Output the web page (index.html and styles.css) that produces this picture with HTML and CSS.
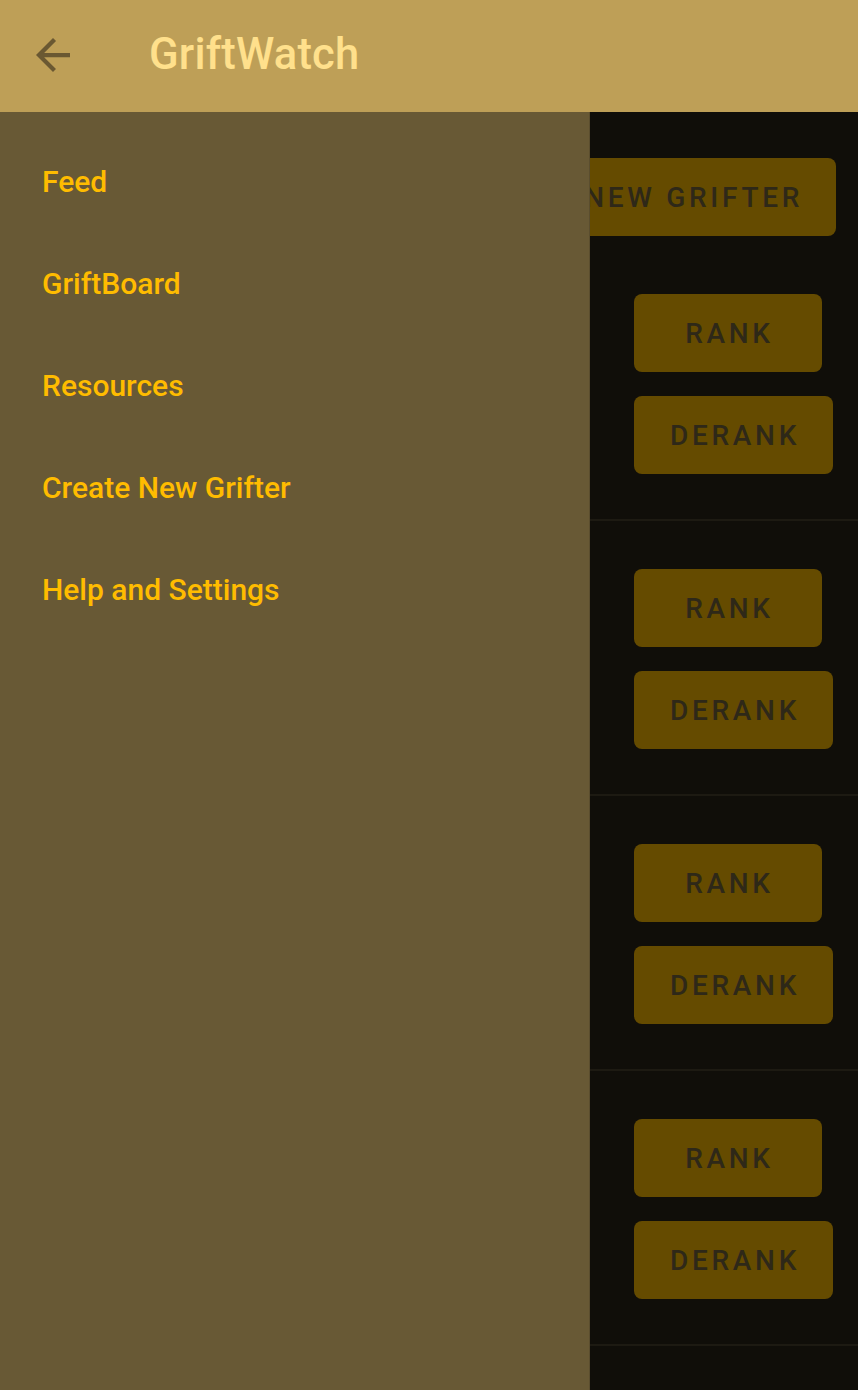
FILE: index.html
```html
<!DOCTYPE html>
<html lang="en">
<head>
<meta charset="utf-8">
<title>GriftWatch</title>
<link rel="stylesheet" href="styles.css">
</head>
<body>
<header class="appbar">
  <button class="back" aria-label="Back">
    <svg viewBox="4 4 16 16" width="34" height="34" aria-hidden="true"><path d="M20 11H7.83l5.59-5.59L12 4l-8 8 8 8 1.41-1.41L7.83 13H20v-2z" fill="currentColor"/></svg>
  </button>
  <h1 class="title">GriftWatch</h1>
</header>
<div class="stage">
  <main class="content">
    <div class="toolbar">
      <button class="btn">Create New Grifter</button>
    </div>
    <ul class="list">
      <li class="row"><div class="actions"><button class="btn btn-rank">Rank</button><button class="btn">Derank</button></div></li>
      <li class="row"><div class="actions"><button class="btn btn-rank">Rank</button><button class="btn">Derank</button></div></li>
      <li class="row"><div class="actions"><button class="btn btn-rank">Rank</button><button class="btn">Derank</button></div></li>
      <li class="row"><div class="actions"><button class="btn btn-rank">Rank</button><button class="btn">Derank</button></div></li>
      <li class="row row-empty"></li>
    </ul>
  </main>
  <nav class="drawer">
    <a class="nav-item" href="#">Feed</a>
    <a class="nav-item" href="#">GriftBoard</a>
    <a class="nav-item" href="#">Resources</a>
    <a class="nav-item" href="#">Create New Grifter</a>
    <a class="nav-item" href="#">Help and Settings</a>
  </nav>
</div>
</body>
</html>
```

FILE: styles.css
```css
* { box-sizing: border-box; }
html, body {
  margin: 0;
  padding: 0;
  height: 100%;
}
body {
  font-family: Roboto, "Liberation Sans", sans-serif;
  background: #100e09;
  overflow: hidden;
}
.appbar {
  height: 112px;
  background: #be9f57;
  display: flex;
  align-items: center;
  position: relative;
  z-index: 2;
}
.back {
  border: 0;
  background: none;
  padding: 0;
  margin: 0 0 2px 36px;
  width: 34px;
  height: 34px;
  color: #6a5832;
  display: flex;
}
.title {
  margin: 0 0 4px 79px;
  font-size: 43.5px;
  font-weight: 500;
  color: #ffe08c;
  letter-spacing: 0.2px;
}
.stage {
  position: relative;
  height: calc(100vh - 112px);
  overflow: hidden;
}
.content {
  background: #100e09;
}
.toolbar {
  display: flex;
  justify-content: flex-end;
  padding: 46px 22px 10px 0;
}
.list {
  list-style: none;
  margin: 0;
  padding: 0;
}
.row {
  height: 275px;
  border-bottom: 2px solid #1d1a12;
  padding: 48px 0 0 634px;
}
.actions {
  display: flex;
  flex-direction: column;
  align-items: flex-start;
  gap: 24px;
}
.btn {
  height: 78px;
  min-width: 188px;
  padding: 0 33px 0 36px;
  border: 0;
  border-radius: 8px;
  background: #654b00;
  color: #2e2818;
  font-family: Roboto, "Liberation Sans", sans-serif;
  font-size: 28px;
  font-weight: 500;
  text-transform: uppercase;
  letter-spacing: 3.7px;
}
.drawer {
  position: absolute;
  top: 0;
  left: 0;
  bottom: 0;
  width: 590px;
  background: #685935;
  border-right: 1px solid #5a4d2e;
  display: flex;
  flex-direction: column;
  padding-top: 19px;
}
.nav-item {
  display: block;
  height: 102px;
  line-height: 102px;
  padding-left: 42px;
  font-size: 30px;
  font-weight: 500;
  color: #ffbc00;
  text-decoration: none;
}
```
